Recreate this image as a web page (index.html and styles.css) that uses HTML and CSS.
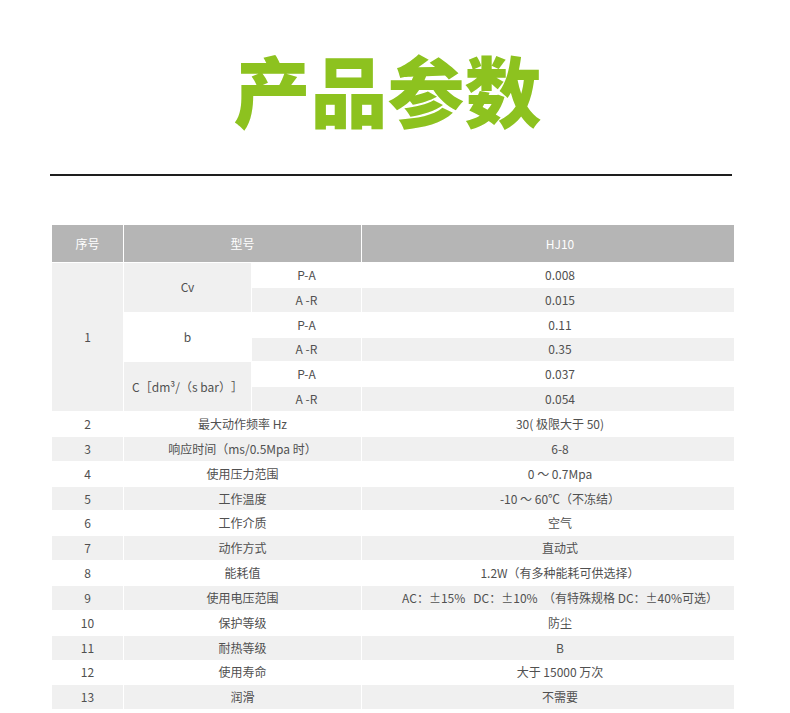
FILE: index.html
```html
<!DOCTYPE html>
<html lang="zh-CN">
<head>
<meta charset="utf-8">
<title>产品参数</title>
<link rel="stylesheet" href="styles.css">
</head>
<body>
<div class="page">
  <h1 class="title">产品参数</h1>
  <div class="rule"></div>
  <table class="spec">
    <colgroup>
      <col class="c1"><col class="c2"><col class="c3"><col class="c4">
    </colgroup>
    <thead>
      <tr><th>序号</th><th colspan="2">型号</th><th class="val">HJ10</th></tr>
    </thead>
    <tbody>
      <tr><td rowspan="6" class="g">1</td><td rowspan="2" class="g">Cv</td><td>P-A</td><td class="val">0.008</td></tr>
      <tr class="alt"><td>A -R</td><td class="val">0.015</td></tr>
      <tr><td rowspan="2" class="w">b</td><td>P-A</td><td class="val">0.11</td></tr>
      <tr class="alt"><td>A -R</td><td class="val">0.35</td></tr>
      <tr><td rowspan="2" class="g">C［dm³/（s bar）］</td><td>P-A</td><td class="val">0.037</td></tr>
      <tr class="alt"><td>A -R</td><td class="val">0.054</td></tr>
      <tr><td>2</td><td colspan="2">最大动作频率 Hz</td><td class="val">30( 极限大于 50)</td></tr>
      <tr class="alt"><td>3</td><td colspan="2">响应时间（ms/0.5Mpa 时）</td><td class="val">6-8</td></tr>
      <tr><td>4</td><td colspan="2">使用压力范围</td><td class="val">0 ～ 0.7Mpa</td></tr>
      <tr class="alt"><td>5</td><td colspan="2">工作温度</td><td class="val">-10 ～ 60℃（不冻结）</td></tr>
      <tr><td>6</td><td colspan="2">工作介质</td><td class="val">空气</td></tr>
      <tr class="alt"><td>7</td><td colspan="2">动作方式</td><td class="val">直动式</td></tr>
      <tr><td>8</td><td colspan="2">能耗值</td><td class="val">1.2W（有多种能耗可供选择）</td></tr>
      <tr class="alt"><td>9</td><td colspan="2">使用电压范围</td><td class="val">AC：±15%&nbsp;&nbsp; DC：±10% &nbsp;（有特殊规格 DC：±40%可选）</td></tr>
      <tr><td>10</td><td colspan="2">保护等级</td><td class="val">防尘</td></tr>
      <tr class="alt"><td>11</td><td colspan="2">耐热等级</td><td class="val">B</td></tr>
      <tr><td>12</td><td colspan="2">使用寿命</td><td class="val">大于 15000 万次</td></tr>
      <tr class="alt"><td>13</td><td colspan="2">润滑</td><td class="val">不需要</td></tr>
    </tbody>
  </table>
</div>
</body>
</html>
```
FILE: styles.css
```css
html, body {
  margin: 0;
  padding: 0;
  background: #ffffff;
}
.page {
  width: 790px;
  font-family: "Noto Sans CJK SC", "Noto Sans", sans-serif;
}
.title {
  margin: 0;
  padding: 50px 15px 0 0;
  height: 106px;
  box-sizing: border-box;
  text-align: center;
  font-size: 77px;
  line-height: 77px;
  font-weight: 900;
  color: #8dc21f;
  letter-spacing: 0;
}
.rule {
  margin: 68px 58px 0 50px;
  height: 2px;
  background: #1e1e1e;
}
.spec {
  margin: 48px 0 0 51px;
  width: 683px;
  border-collapse: collapse;
  table-layout: fixed;
  font-size: 12px;
  color: #505050;
  text-spacing-trim: space-all;
}
.c1 { width: 72px; }
.c2 { width: 128px; }
.c3 { width: 110px; }
.c4 { width: 373px; }
.spec th, .spec td {
  border: 1px solid #ffffff;
  padding: 0;
  text-align: center;
  vertical-align: middle;
  white-space: nowrap;
}
.spec th {
  height: 37px;
  background: #b5b5b5;
  color: #ffffff;
  font-weight: normal;
  font-size: 12px;
}
.spec td {
  height: 23.85px;
  line-height: 16px;
}
.spec .val {
  padding-left: 24px;
}
.spec tr.alt td {
  background: #f0f0f0;
}
.spec td.g {
  background: #f0f0f0;
}
.spec td.w {
  background: #ffffff;
}
```
